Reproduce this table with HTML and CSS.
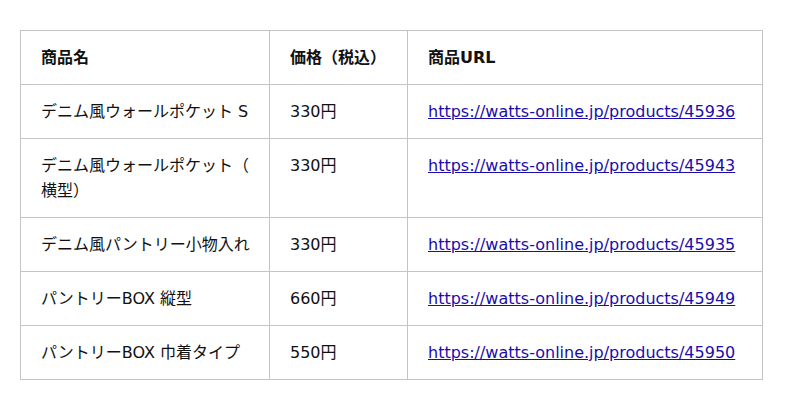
FILE: index.html
```html
<!DOCTYPE html>
<html lang="ja">
<head>
<meta charset="utf-8">
<link rel="stylesheet" href="styles.css">
</head>
<body>
<table class="products">
  <colgroup>
    <col class="c-name">
    <col class="c-price">
    <col class="c-url">
  </colgroup>
  <thead>
    <tr><th>商品名</th><th>価格（税込）</th><th>商品URL</th></tr>
  </thead>
  <tbody>
    <tr><td class="name">デニム風ウォールポケット S</td><td>330円</td><td><a href="#">https://watts-online.jp/products/45936</a></td></tr>
    <tr><td class="name">デニム風ウォールポケット（横型）</td><td>330円</td><td><a href="#">https://watts-online.jp/products/45943</a></td></tr>
    <tr><td class="name">デニム風パントリー小物入れ</td><td>330円</td><td><a href="#">https://watts-online.jp/products/45935</a></td></tr>
    <tr><td class="name">パントリーBOX 縦型</td><td>660円</td><td><a href="#">https://watts-online.jp/products/45949</a></td></tr>
    <tr><td class="name">パントリーBOX 巾着タイプ</td><td>550円</td><td><a href="#">https://watts-online.jp/products/45950</a></td></tr>
  </tbody>
</table>
</body>
</html>
```
FILE: styles.css
```css
body {
  margin: 0;
  padding: 30px 20px;
  background: #fff;
  font-family: "DejaVu Sans", "Noto Sans CJK JP", sans-serif;
  font-size: 16px;
  line-height: 25px;
  color: #111;
}
.products {
  border-collapse: collapse;
  table-layout: fixed;
  width: 742px;
}
.c-name { width: 249px; }
.c-price { width: 138px; }
.c-url { width: 355px; }
.products th,
.products td {
  border: 1px solid #c4c4c4;
  padding: 14px 16px 14px 20px;
  text-align: left;
  vertical-align: top;
}
.products th {
  font-weight: bold;
}
.products .name {
  line-break: anywhere;
}
.products a {
  color: #1a0dab;
}
```
